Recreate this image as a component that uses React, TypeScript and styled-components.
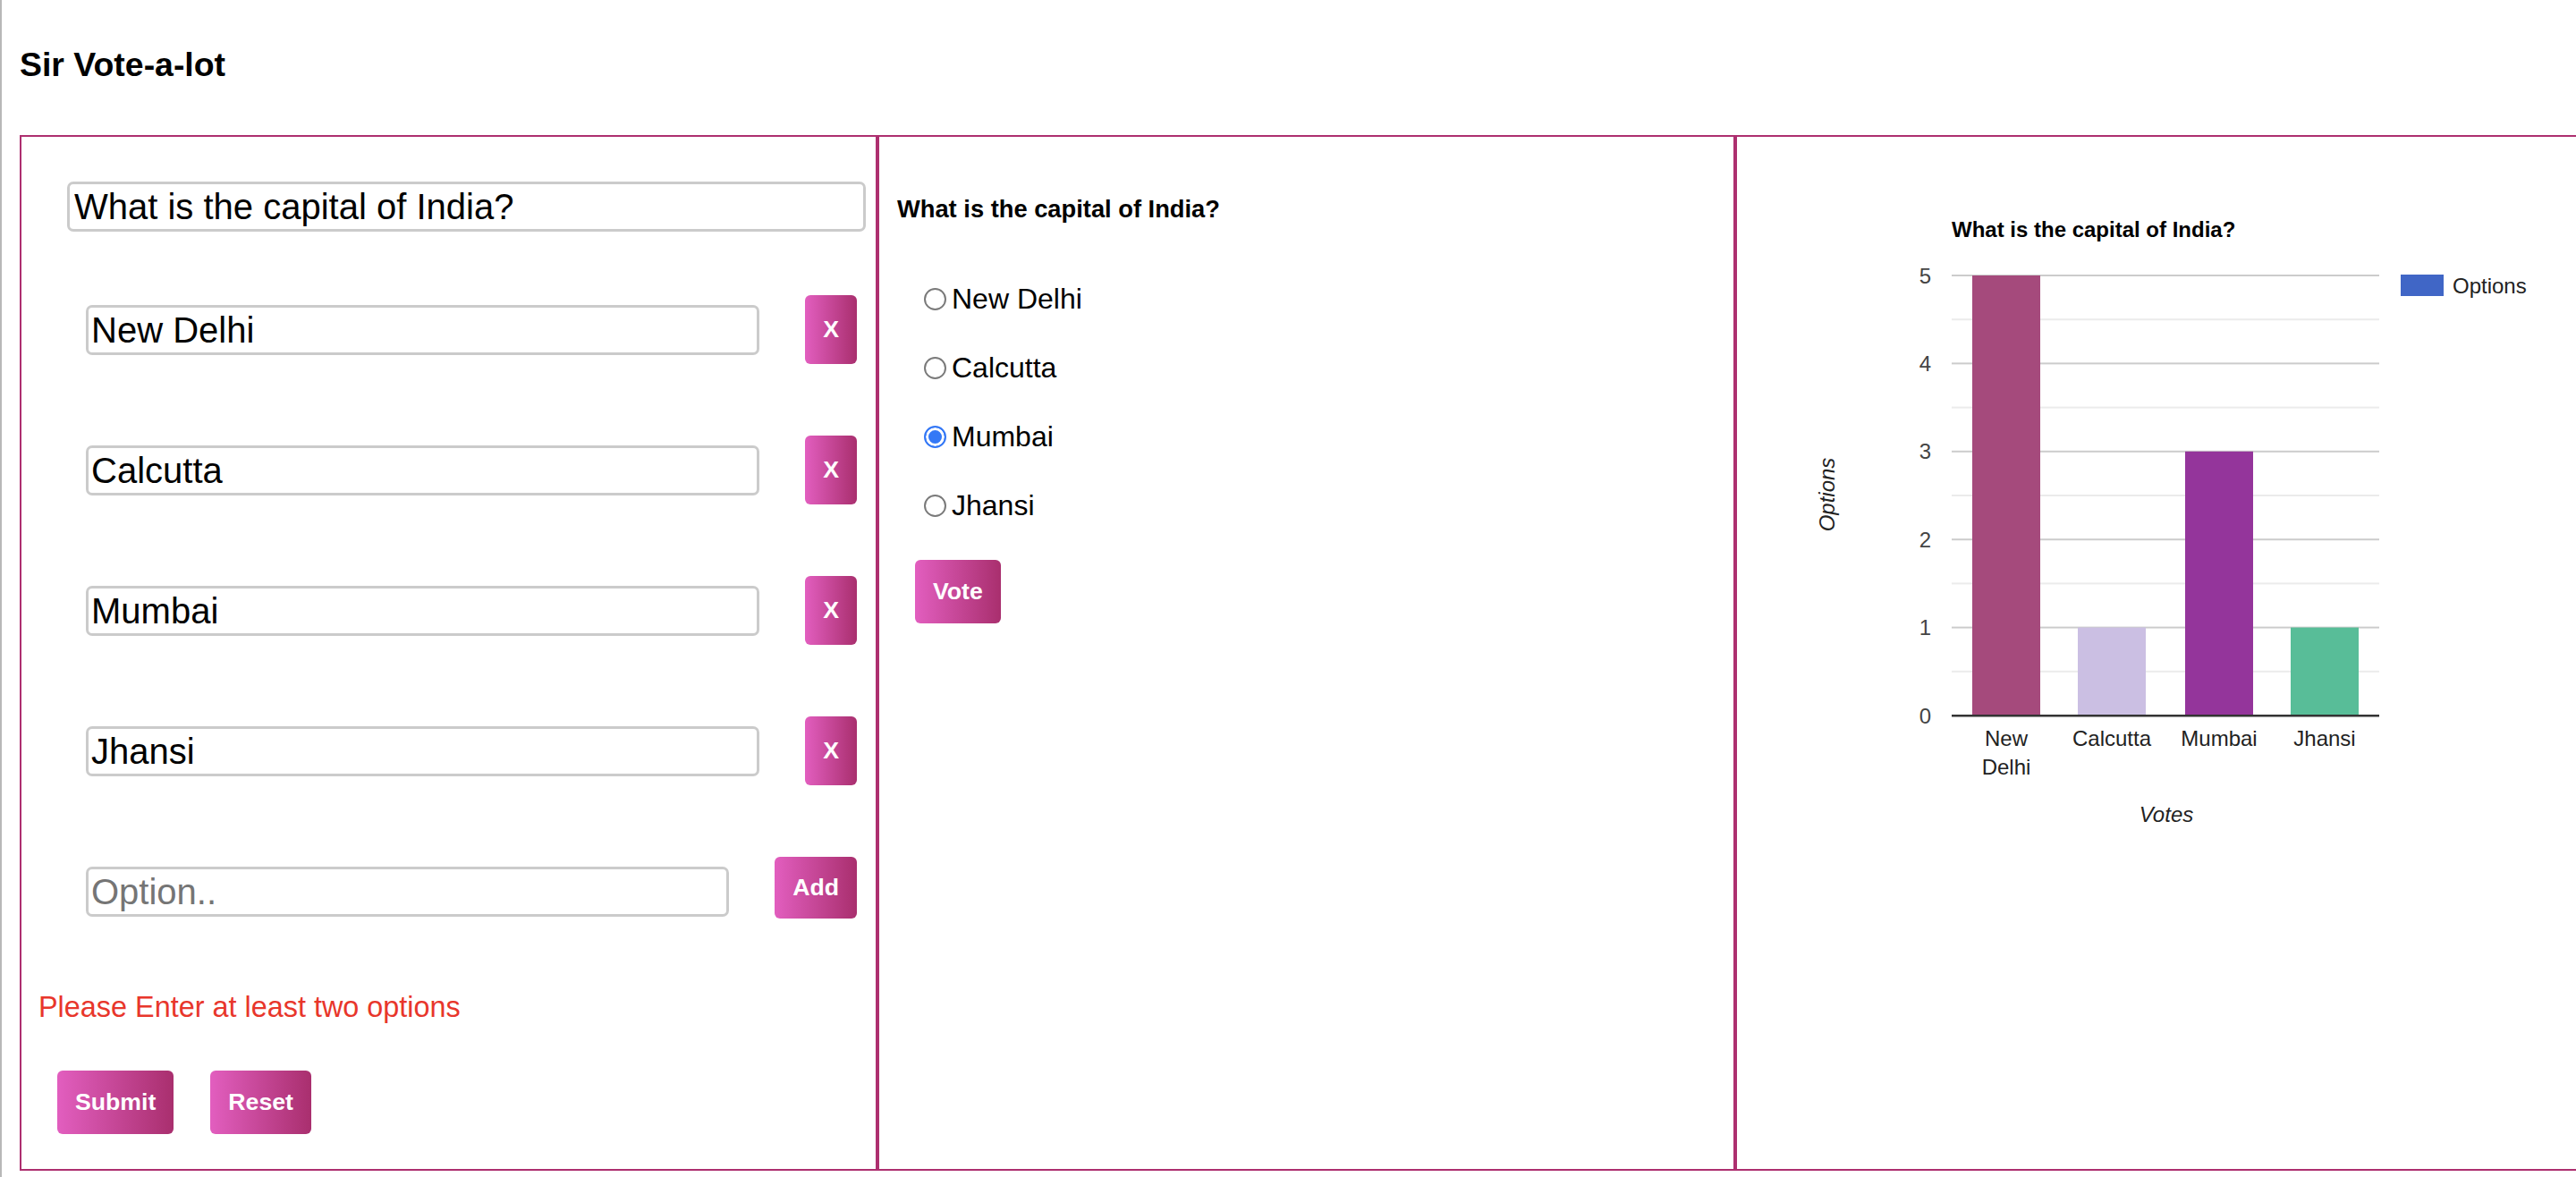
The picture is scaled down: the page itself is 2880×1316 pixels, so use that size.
import React from "react";
import styled, { createGlobalStyle } from "styled-components";

const Global = createGlobalStyle`
  html, body {
    margin: 0;
    padding: 0;
    background: #ffffff;
    overflow: hidden;
  }
  body {
    font-family: "Liberation Sans", Arial, Helvetica, sans-serif;
    color: #000;
  }
`;

const Page = styled.div`
  box-sizing: border-box;
  min-height: 1316px;
  border-left: 2px solid #b8b8b8;
  padding-left: 20px;
`;

const Title = styled.h1`
  margin: 0 0 60px 0;
  padding-top: 53px;
  font-size: 37.44px;
  line-height: 38px;
  font-weight: 700;
`;

const Panel = styled.div`
  display: flex;
  width: max-content;
`;

const Column = styled.section`
  box-sizing: border-box;
  width: 959px;
  height: 1158px;
  border: 2px solid #ad2f6f;
  display: flex;
  flex-direction: column;
  align-items: stretch;
`;

const TextInput = styled.input<{ $w?: number }>`
  box-sizing: border-box;
  height: 56px;
  ${(p) => (p.$w ? `width: ${p.$w}px;` : "")}
  border: 3px solid #cbcbcb;
  border-radius: 7px;
  padding: 0 3px;
  font-family: "Liberation Sans", Arial, sans-serif;
  font-size: 40px;
  color: #000;
  background: #fff;
  outline: none;
  &::placeholder {
    color: #757575;
  }
`;

const QuestionInput = styled(TextInput)`
  margin: 50px 11px 0 51px;
  padding: 0 5px;
`;

const OptionList = styled.div`
  display: flex;
  flex-direction: column;
  gap: 80px;
  margin-top: 71px;
`;

const OptionRow = styled.div`
  display: flex;
  align-items: flex-start;
  justify-content: space-between;
  padding: 0 21px 0 72px;
  & > input {
    margin-top: 11px;
  }
`;

const PinkButton = styled.button<{ $h: number }>`
  box-sizing: border-box;
  height: ${(p) => p.$h}px;
  padding: 0 20px;
  border: none;
  border-radius: 6px;
  background: linear-gradient(to right, #e25ebf, #a92f6e);
  color: #fff;
  font-family: "Liberation Sans", Arial, sans-serif;
  font-weight: 700;
  font-size: 26.67px;
  line-height: 1;
  cursor: pointer;
  flex: none;
`;

const ErrorText = styled.div`
  margin: 83px 0 0 19px;
  font-size: 32.4px;
  line-height: 32px;
  color: #e8362b;
`;

const ActionRow = styled.div`
  display: flex;
  gap: 41px;
  margin: 55px 0 0 40px;
`;

const PollTitle = styled.div`
  margin: 67px 0 0 20px;
  font-size: 27.3px;
  line-height: 27px;
  font-weight: 700;
`;

const RadioList = styled.div`
  display: flex;
  flex-direction: column;
  gap: 37px;
  margin: 67px 0 0 50px;
`;

const RadioRow = styled.label`
  display: flex;
  align-items: center;
  gap: 6px;
  height: 40px;
  font-size: 32px;
  line-height: 40px;
`;

const Radio = styled.input`
  appearance: none;
  -webkit-appearance: none;
  box-sizing: border-box;
  margin: 0;
  width: 25px;
  height: 25px;
  border-radius: 50%;
  border: 2px solid #7a7a7a;
  background: #fff;
  &:checked {
    border-color: #3478f6;
    background: #3478f6;
    box-shadow: inset 0 0 0 3px #fff;
  }
`;

const VoteWrap = styled.div`
  margin: 41px 0 0 40px;
  display: flex;
`;

const Chart = styled.svg`
  display: block;
`;

const options = ["New Delhi", "Calcutta", "Mumbai", "Jhansi"];
const votes = [5, 1, 3, 1];
const barColors = ["#a54a7c", "#cbbfe3", "#94359b", "#58bd98"];

const BASE_Y = 800;
const UNIT = 98.4;
const BAR_X = [2205, 2323, 2443, 2561];
const BAR_W = 76;

function VoteChart() {
  const majors = [1, 2, 3, 4, 5];
  const minors = [0.5, 1.5, 2.5, 3.5, 4.5];
  return (
    <Chart width={955} height={800} viewBox="1942 153 955 800">
      <text
        x={2182}
        y={265}
        fontFamily="Liberation Sans, Arial, sans-serif"
        fontWeight={700}
        fontSize={24}
        fill="#000"
      >
        What is the capital of India?
      </text>
      {minors.map((m) => (
        <rect key={"mi" + m} x={2182} y={BASE_Y - m * UNIT - 1} width={478} height={2} fill="#ebebeb" />
      ))}
      {majors.map((m) => (
        <rect key={"ma" + m} x={2182} y={BASE_Y - m * UNIT - 1} width={478} height={2} fill="#cccccc" />
      ))}
      {[0, 1, 2, 3, 4, 5].map((v) => (
        <text
          key={"yl" + v}
          x={2159}
          y={BASE_Y - v * UNIT + 8.6}
          textAnchor="end"
          fontFamily="Liberation Sans, Arial, sans-serif"
          fontSize={24}
          fill="#444"
        >
          {v}
        </text>
      ))}
      {votes.map((v, i) => (
        <rect key={"b" + i} x={BAR_X[i]} y={BASE_Y - v * UNIT} width={BAR_W} height={v * UNIT} fill={barColors[i]} />
      ))}
      <rect x={2182} y={BASE_Y - 1} width={478} height={2.5} fill="#333" />
      {options.map((o, i) => {
        const cx = BAR_X[i] + BAR_W / 2;
        const lines = o === "New Delhi" ? ["New", "Delhi"] : [o];
        return lines.map((ln, j) => (
          <text
            key={"xl" + i + j}
            x={cx}
            y={834 + j * 32}
            textAnchor="middle"
            fontFamily="Liberation Sans, Arial, sans-serif"
            fontSize={24}
            fill="#222"
          >
            {ln}
          </text>
        ));
      })}
      <text
        x={2422}
        y={919}
        textAnchor="middle"
        fontFamily="Liberation Sans, Arial, sans-serif"
        fontStyle="italic"
        fontSize={24}
        fill="#222"
      >
        Votes
      </text>
      <text
        x={0}
        y={0}
        transform="translate(2051 553) rotate(-90)"
        textAnchor="middle"
        fontFamily="Liberation Sans, Arial, sans-serif"
        fontStyle="italic"
        fontSize={24}
        fill="#222"
      >
        Options
      </text>
      <rect x={2684} y={307} width={48} height={24} fill="#4066c6" />
      <text
        x={2742}
        y={327.6}
        fontFamily="Liberation Sans, Arial, sans-serif"
        fontSize={24}
        fill="#222"
      >
        Options
      </text>
    </Chart>
  );
}

export default function App() {
  return (
    <>
      <Global />
      <Page>
        <Title>Sir Vote-a-lot</Title>
        <Panel>
          <Column>
            <QuestionInput defaultValue="What is the capital of India?" />
            <OptionList>
              {options.map((o) => (
                <OptionRow key={o}>
                  <TextInput $w={753} defaultValue={o} />
                  <PinkButton $h={77}>X</PinkButton>
                </OptionRow>
              ))}
              <OptionRow>
                <TextInput $w={719} placeholder="Option.." />
                <PinkButton $h={69}>Add</PinkButton>
              </OptionRow>
            </OptionList>
            <ErrorText>Please Enter at least two options</ErrorText>
            <ActionRow>
              <PinkButton $h={71}>Submit</PinkButton>
              <PinkButton $h={71}>Reset</PinkButton>
            </ActionRow>
          </Column>
          <Column>
            <PollTitle>What is the capital of India?</PollTitle>
            <RadioList>
              {options.map((o) => (
                <RadioRow key={o}>
                  <Radio type="radio" name="vote" defaultChecked={o === "Mumbai"} />
                  {o}
                </RadioRow>
              ))}
            </RadioList>
            <VoteWrap>
              <PinkButton $h={71}>Vote</PinkButton>
            </VoteWrap>
          </Column>
          <Column>
            <VoteChart />
          </Column>
        </Panel>
      </Page>
    </>
  );
}
